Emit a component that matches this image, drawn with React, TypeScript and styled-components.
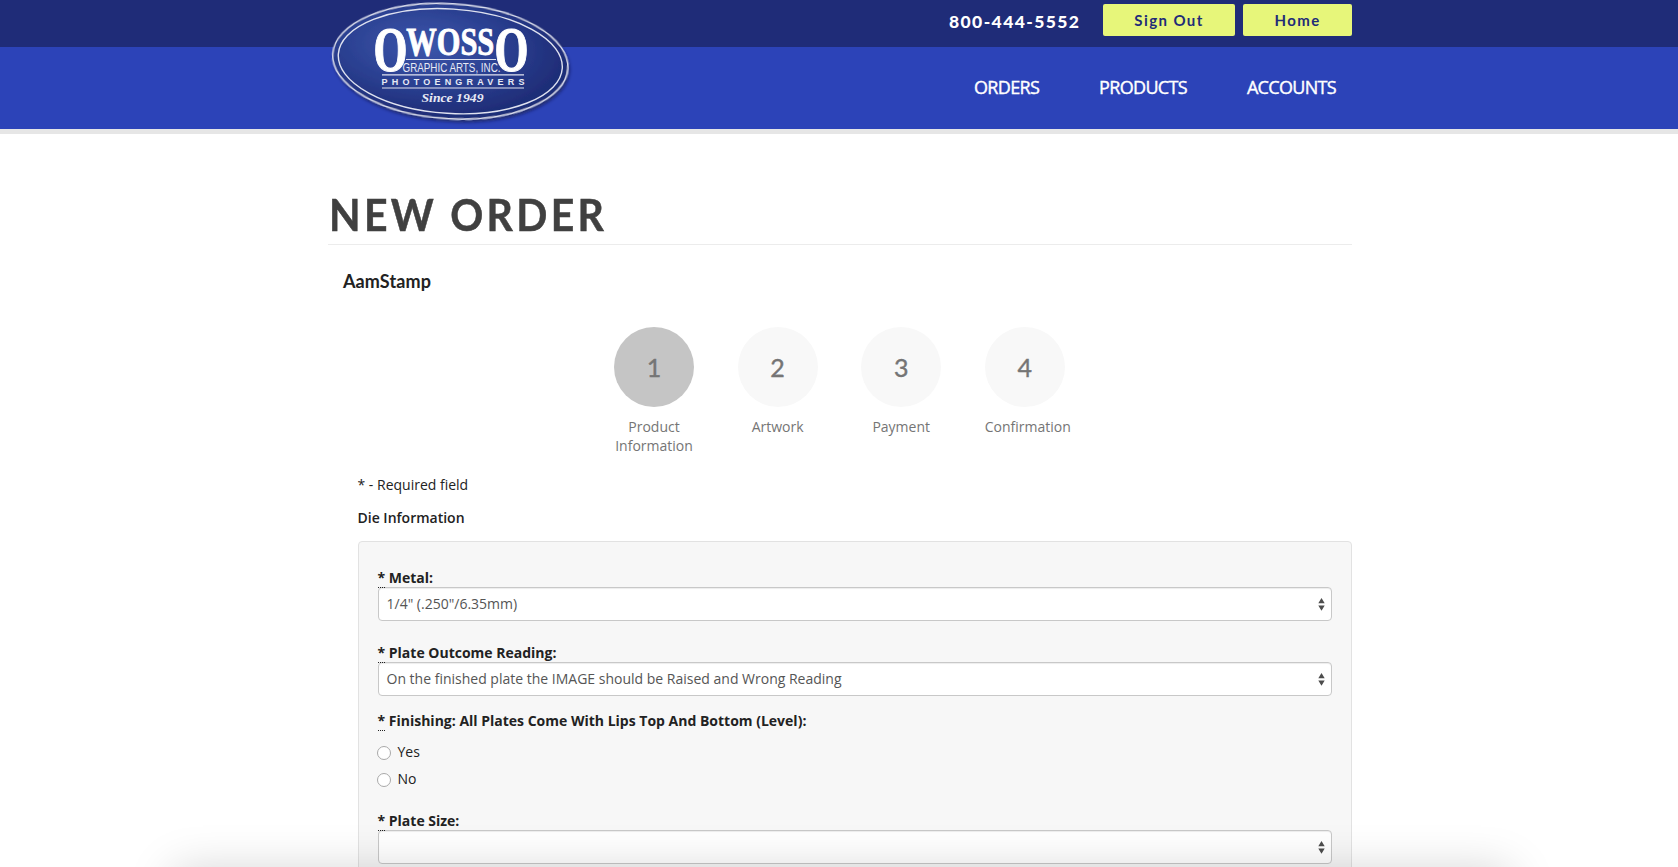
import React from "react";
import styled, { createGlobalStyle } from "styled-components";

const GlobalStyle = createGlobalStyle`
  *, *::before, *::after { box-sizing: border-box; }
  body {
    margin: 0;
    background: #fff;
    color: #222;
    font: 14px/20px "Open Sans", sans-serif;
    overflow: hidden;
  }
`;

const Page = styled.div`
  position: relative;
  height: 867px;
  overflow: hidden;
`;

const Header = styled.header`
  height: 134px;
  border-bottom: 5px solid #e6e6e6;
  background: linear-gradient(#1f2c78 47px, #2c43b8 47px);
`;

const Container = styled.div`
  width: 1024px;
  margin-left: 328px;
`;

const HeaderInner = styled(Container)`
  display: flex;
  justify-content: space-between;
`;

const LogoSvg = styled.svg`
  display: block;
  width: 252px;
  height: 129px;
  overflow: visible;
`;

const HeaderRight = styled.div`
  display: flex;
  flex-direction: column;
`;

const TopRow = styled.div`
  display: flex;
  justify-content: flex-end;
  height: 47px;
  padding-top: 4px;
`;

const Phone = styled.span`
  width: 154px;
  padding-top: 1px;
  font: 900 17.5px/34px Lato, sans-serif;
  letter-spacing: 1.4px;
  color: #fff;
`;

const TopButton = styled.button<{ $width: number }>`
  width: ${(p) => p.$width}px;
  height: 32px;
  margin-left: 8px;
  padding: 0 0 1px;
  border: 0;
  border-radius: 2px;
  background: #e7f67a;
  color: #1f2c78;
  font: 700 15px/30px Lato, sans-serif;
  letter-spacing: 1.4px;
  &:first-of-type { margin-left: 0; }
`;

const Nav = styled.nav`
  display: flex;
  justify-content: flex-end;
  gap: 60px;
  padding: 28px 16px 0 0;
`;

const NavLink = styled.a`
  color: #fff;
  font-size: 18px;
  line-height: 25px;
  letter-spacing: -0.68px;
  -webkit-text-stroke: 0.4px #fff;
`;

const Title = styled.h1`
  height: 111px;
  margin: 0;
  padding: 51px 0 0 1px;
  border-bottom: 1px solid #ececec;
  color: #404040;
  font: 700 44px/58px Lato, sans-serif;
  letter-spacing: 3.6px;
  -webkit-text-stroke: 0.5px #404040;
`;

const TitleText = styled.span`
  display: inline-block;
  transform: scaleX(0.93);
  transform-origin: left;
`;

const Customer = styled.h2`
  margin: 24px 0 0 15px;
  font: 700 18px/24px Lato, sans-serif;
  letter-spacing: 0.1px;
`;

const Steps = styled.ol`
  display: flex;
  gap: 43.6px;
  height: 145px;
  margin: 34px 0 0 286px;
  padding: 0;
  list-style: none;
`;

const Step = styled.li`
  width: 80px;
  color: #757575;
  text-align: center;
  line-height: 19px;
`;

const StepCircle = styled.div<{ $active?: boolean }>`
  height: 80px;
  margin-bottom: 10px;
  border-radius: 50%;
  background: ${(p) => (p.$active ? "#c5c5c5" : "#f8f8f8")};
  font: 400 25px/80px Lato, sans-serif;
  -webkit-text-stroke: 0.4px #757575;
`;

const Form = styled.form`
  margin-left: 30px;
`;

const Note = styled.p`
  margin: 3px 0 0 -0.5px;
`;

const SectionTitle = styled.h3`
  margin: 12px 0 13px -0.5px;
  font-size: 14px;
  line-height: 21px;
  font-weight: 600;
`;

const Panel = styled.div`
  height: 400px;
  padding: 26px 19px 0;
  border: 1px solid #e2e2e2;
  border-radius: 4px;
  background: #f7f7f7;
`;

const Field = styled.div<{ $gap: number }>`
  margin-bottom: ${(p) => p.$gap}px;
`;

const Label = styled.label`
  display: block;
  height: 19px;
  margin-left: -0.5px;
  font-weight: 700;
`;

const Required = styled.abbr`
  display: inline-block;
  height: 20px;
  border-bottom: 1px dotted #222;
  text-decoration: none;
`;

const SelectBox = styled.div`
  display: flex;
  align-items: center;
  justify-content: space-between;
  height: 34px;
  padding: 0 6px 0 7.5px;
  border: 1px solid #c8c8c8;
  border-radius: 4px;
  background: #fff;
  box-shadow: inset 0 1px 1px rgba(0, 0, 0, 0.075);
  color: #555;
`;

const Radio = styled.label`
  display: flex;
  align-items: center;
  gap: 6.5px;
  height: 20px;
  margin: 0 0 7px -1px;
`;

const RadioDot = styled.input`
  appearance: none;
  width: 14px;
  height: 14px;
  margin: 2px 0 0;
  border: 1px solid #a9a9a9;
  border-radius: 50%;
  background: #fff;
`;

const RadioGroup = styled.div`
  padding-top: 12px;
`;

const BottomShadow = styled.div`
  position: absolute;
  top: 871px;
  left: 174px;
  width: 1336px;
  height: 200px;
  box-shadow: 0 0 44px rgba(0, 0, 0, 0.18);
  pointer-events: none;
`;

function Logo() {
  return (
    <LogoSvg viewBox="328 0 252 129">
      <defs>
        <radialGradient id="oval" cx="0.38" cy="0.38" r="0.6">
          <stop offset="0" stopColor="#3c56ab" />
          <stop offset="0.6" stopColor="#2a3f90" />
          <stop offset="1" stopColor="#1f2d78" />
        </radialGradient>
        <filter id="drop" x="-10%" y="-10%" width="120%" height="130%">
          <feDropShadow dx="1.5" dy="2.5" stdDeviation="1.8" floodColor="#0a1035" floodOpacity="0.55" />
        </filter>
      </defs>
      <g transform="rotate(3.6 450.3 61.2)" stroke="#dfe2f0" strokeWidth="1.4">
        <ellipse cx="450.3" cy="61.2" rx="117.8" ry="57.4" fill="url(#oval)" filter="url(#drop)" />
        <ellipse cx="450.3" cy="61.2" rx="112.2" ry="52.2" fill="none" />
      </g>
      <g fill="#fff" fontFamily="Liberation Serif, serif" fontWeight="700" stroke="#fff" strokeWidth="1.2">
        <text x="373.5" y="71" fontSize="63" textLength="34" lengthAdjust="spacingAndGlyphs">O</text>
        <text x="406.3" y="55.3" fontSize="40" strokeWidth="0.9" textLength="88" lengthAdjust="spacingAndGlyphs">WOSS</text>
        <text x="494.5" y="71" fontSize="63" textLength="34" lengthAdjust="spacingAndGlyphs">O</text>
      </g>
      <g fill="#e8eaf5" fontFamily="Liberation Sans, sans-serif">
        <text x="402.5" y="72" fontSize="13.5" textLength="98" lengthAdjust="spacingAndGlyphs">GRAPHIC ARTS, INC.</text>
        <text x="381.5" y="84.7" fontSize="9" fontWeight="700" textLength="143">PHOTOENGRAVERS</text>
        <text x="421.5" y="101.5" fontFamily="Liberation Serif, serif" fontStyle="italic" fontWeight="700" fontSize="13" textLength="62" lengthAdjust="spacingAndGlyphs">Since 1949</text>
      </g>
      <path d="M406 59.5H496M382 74.8H524M382 88H524" stroke="#dfe2f0" strokeWidth="1.2" />
    </LogoSvg>
  );
}

function Select({ value }: { value: string }) {
  return (
    <SelectBox role="combobox">
      <span>{value}</span>
      <svg width="7" height="13" viewBox="0 0 7 13" fill="#4d4d4d">
        <path d="M3.5 0 6.7 5.3H.3ZM.3 7.5H6.7L3.5 12.8Z" />
      </svg>
    </SelectBox>
  );
}

function FieldLabel({ text }: { text: string }) {
  return (
    <Label>
      <Required title="required">*</Required> {text}
    </Label>
  );
}

const steps = ["Product Information", "Artwork", "Payment", "Confirmation"];

export default function App() {
  return (
    <Page>
      <GlobalStyle />
      <Header>
        <HeaderInner>
          <Logo />
          <HeaderRight>
            <TopRow>
              <Phone>800-444-5552</Phone>
              <TopButton $width={132}>Sign Out</TopButton>
              <TopButton $width={109}>Home</TopButton>
            </TopRow>
            <Nav>
              <NavLink>ORDERS</NavLink>
              <NavLink>PRODUCTS</NavLink>
              <NavLink>ACCOUNTS</NavLink>
            </Nav>
          </HeaderRight>
        </HeaderInner>
      </Header>
      <Container as="main">
        <Title>
          <TitleText>NEW ORDER</TitleText>
        </Title>
        <Customer>AamStamp</Customer>
        <Steps>
          {steps.map((name, i) => (
            <Step key={name}>
              <StepCircle $active={i === 0}>{i + 1}</StepCircle>
              {name}
            </Step>
          ))}
        </Steps>
        <Form>
          <Note>* - Required field</Note>
          <SectionTitle>Die Information</SectionTitle>
          <Panel>
            <Field $gap={22}>
              <FieldLabel text="Metal:" />
              <Select value={'1/4" (.250"/6.35mm)'} />
            </Field>
            <Field $gap={15}>
              <FieldLabel text="Plate Outcome Reading:" />
              <Select value="On the finished plate the IMAGE should be Raised and Wrong Reading" />
            </Field>
            <Field $gap={22}>
              <FieldLabel text="Finishing: All Plates Come With Lips Top And Bottom (Level):" />
              <RadioGroup>
                <Radio><RadioDot type="radio" name="finishing" />Yes</Radio>
                <Radio><RadioDot type="radio" name="finishing" />No</Radio>
              </RadioGroup>
            </Field>
            <Field $gap={22}>
              <FieldLabel text="Plate Size:" />
              <Select value="" />
            </Field>
          </Panel>
        </Form>
      </Container>
      <BottomShadow />
    </Page>
  );
}
